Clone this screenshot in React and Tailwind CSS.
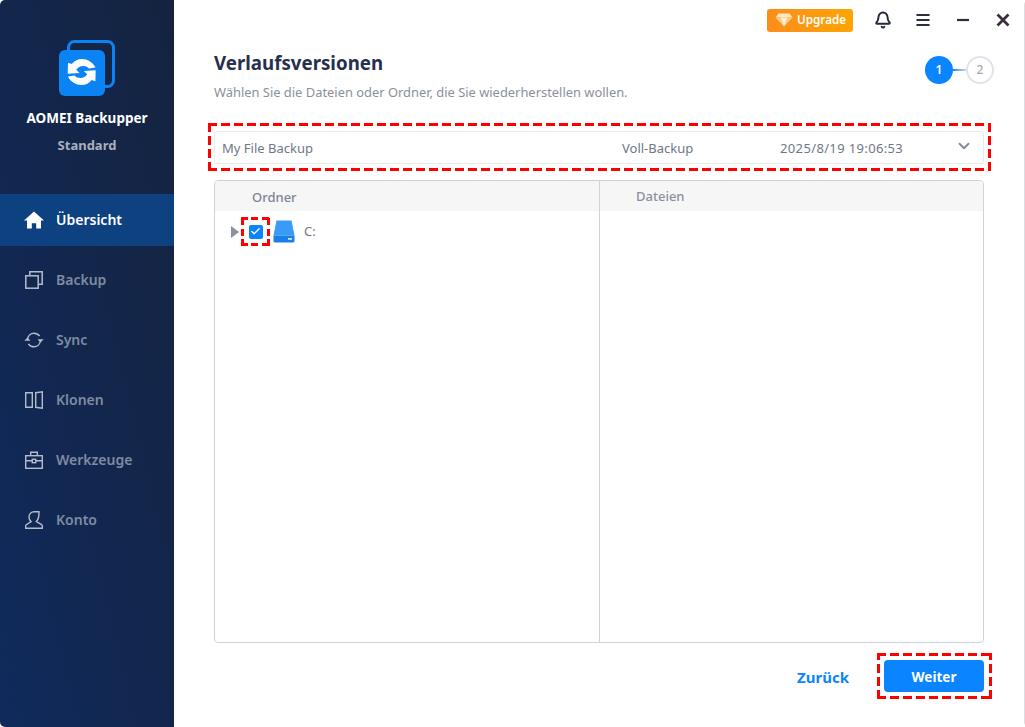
import React from "react";
import { Bell, ChevronDown, Check } from "lucide-react";

const dashLong =
  "[background-image:repeating-linear-gradient(90deg,#ff0000_0,#ff0000_9px,transparent_9px,transparent_13px),repeating-linear-gradient(90deg,#ff0000_0,#ff0000_9px,transparent_9px,transparent_13px),repeating-linear-gradient(0deg,#ff0000_0,#ff0000_9px,transparent_9px,transparent_13px),repeating-linear-gradient(0deg,#ff0000_0,#ff0000_9px,transparent_9px,transparent_13px)] [background-size:100%_3px,100%_3px,3px_100%,3px_100%] [background-position:0_0,0_100%,0_0,100%_0] bg-no-repeat";
const dashShort =
  "[background-image:repeating-linear-gradient(90deg,#ff0000_0,#ff0000_7px,transparent_7px,transparent_10.5px),repeating-linear-gradient(90deg,#ff0000_0,#ff0000_7px,transparent_7px,transparent_10.5px),repeating-linear-gradient(0deg,#ff0000_0,#ff0000_7px,transparent_7px,transparent_10.5px),repeating-linear-gradient(0deg,#ff0000_0,#ff0000_7px,transparent_7px,transparent_10.5px)] [background-size:100%_3px,100%_3px,3px_100%,3px_100%] [background-position:0_0,0_100%,0_0,100%_0] bg-no-repeat";

function BackupIcon() {
  return (
    <svg width="18" height="18" viewBox="0 0 18 18" fill="none" stroke="#b4bccb" strokeWidth="1.5">
      <rect x="0.8" y="4.800" width="12.400" height="12.400" />
      <path d="M4.800 4.500V0.800H17.200V13.200H13.500" />
    </svg>
  );
}
function SyncIcon() {
  return (
    <svg width="20" height="18" viewBox="0 0 20 18" fill="none" stroke="#b4bccb" strokeWidth="1.4">
      <path d="M3.500 8.500C3.900 4.800 6.600 2.200 10 2.200c2.400 0 4.300 1 5.600 2.800" />
      <path d="M16.500 9.500c-.4 3.700-3.100 6.300-6.500 6.300-2.400 0-4.300-1-5.600-2.800" />
      <path d="M0.300 9.800L3.500 6.600L6.500 9.800Z" fill="#b4bccb" stroke="none" />
      <path d="M19.700 8.200L16.500 11.400L13.500 8.200Z" fill="#b4bccb" stroke="none" />
    </svg>
  );
}
function CloneIcon() {
  return (
    <svg width="18" height="18" viewBox="0 0 18 18" fill="none" stroke="#b4bccb" strokeWidth="1.4">
      <path d="M0.700 1.700H7.300V16.300H0.700Z" />
      <path d="M10.700 1.700L17.300 0.800V17.200L10.700 16.300Z" />
    </svg>
  );
}
function ToolsIcon() {
  return (
    <svg width="18" height="18" viewBox="0 0 18 18" fill="none" stroke="#b4bccb" strokeWidth="1.4">
      <rect x="0.700" y="4.700" width="16.600" height="12.600" />
      <path d="M5.700 4.500V1.200H12.300V4.500" />
      <path d="M0.700 9.700H7M11 9.700H17.300" />
      <rect x="7.300" y="8.300" width="3.400" height="3.400" />
    </svg>
  );
}
function UserIcon() {
  return (
    <svg width="18" height="18" viewBox="0 0 18 18" fill="none" stroke="#b4bccb" strokeWidth="1.4">
      <path d="M6 10.600C4.500 9.400 4 8 4 6c0-3.200 2.200-5.300 5.200-5.300H14c0 2 0 3.300-.4 5.300-.4 2-1 3.500-2.200 4.600l5.300 3.100c.4.300.6.600.6 1v2.600H.7v-2.600c0-.4.200-.7.600-1Z" />
    </svg>
  );
}
function HomeIcon() {
  return (
    <svg width="20" height="18" viewBox="0 0 20 18" fill="#ffffff">
      <path d="M10 0.500L0 9.500h3V17.500h4.800v-5.300h4.400v5.300H17V9.500h3Z" />
    </svg>
  );
}
function Logo() {
  const arrow =
    "M36.500 27.500C33.500 22 28.500 19 23 19C18.500 19 15 21 12.800 24L9 22.800L8.700 33.800L20.500 33L17.300 29.800C18.800 27.300 21 26 24 26C26.500 26 28.500 26.800 30 28.500Z";
  return (
    <svg width="56" height="56" viewBox="0 0 56 56" fill="none">
      <rect x="9.500" y="1.500" width="45" height="45" rx="6" stroke="#0a84f5" strokeWidth="3" />
      <rect x="0" y="10" width="46" height="46" rx="6" fill="#0a84f5" />
      <path d={arrow} fill="#ffffff" />
      <path d={arrow} fill="#ffffff" transform="rotate(180 22.700 32)" />
    </svg>
  );
}
function Gem() {
  return (
    <svg width="18" height="14" viewBox="0 0 18 14">
      <path d="M3.500 0.500H14.500L17.500 4.500H0.500Z" fill="#ffe9c4" />
      <path d="M0.500 4.500H17.500L9 13.500Z" fill="#ffc97f" />
      <path d="M5.500 4.500H12.500L9 13.500Z" fill="#fff0d6" />
    </svg>
  );
}
function Drive() {
  return (
    <svg width="22" height="23" viewBox="0 0 22 23">
      <path d="M3.500 0.500H18.500L21.500 15.500H0.500Z" fill="#3a9bf6" />
      <path d="M0.500 15.500H21.500V21a1.500 1.500 0 0 1-1.500 1.500H2A1.500 1.500 0 0 1 .5 21Z" fill="#1a7fe8" />
      <rect x="15" y="18" width="4" height="1.800" fill="#cfe7ff" />
    </svg>
  );
}

function NavItem({ icon, label, active }) {
  return (
    <div
      className={
        active
          ? "h-[52px] flex items-center pl-[24px] bg-[#0d417f] text-white"
          : "h-[52px] mt-[8px] flex items-center pl-[24px] text-[#7e8ba3]"
      }
    >
      <span className="w-[20px] flex justify-center">{icon}</span>
      <span className="ml-[12px] text-[14px] font-semibold leading-none">{label}</span>
    </div>
  );
}

export default function App() {
  return (
    <div
      className="w-[1025px] h-[727px] flex overflow-hidden rounded-[5px] bg-white text-[#6f7786]"
      style={{ fontFamily: '"Noto Sans", "Open Sans", sans-serif' }}
    >
      <aside className="w-[174px] shrink-0 bg-gradient-to-tr from-[#0f2a5c] to-[#15233f] flex flex-col">
        <div className="pt-[40px] flex flex-col items-center">
          <div className="ml-[-1px]"><Logo /></div>
          <div className="mt-[12px] text-[13.5px] font-bold text-white leading-[20px]">AOMEI Backupper</div>
          <div className="mt-[7px] text-[13px] font-bold text-[#a9b0bd] leading-[20px]">Standard</div>
        </div>
        <nav className="mt-[39px] flex flex-col">
          <NavItem active icon={<HomeIcon />} label="Übersicht" />
          <NavItem icon={<BackupIcon />} label="Backup" />
          <NavItem icon={<SyncIcon />} label="Sync" />
          <NavItem icon={<CloneIcon />} label="Klonen" />
          <NavItem icon={<ToolsIcon />} label="Werkzeuge" />
          <NavItem icon={<UserIcon />} label="Konto" />
        </nav>
      </aside>

      <main className="flex-1 flex flex-col min-w-0 border-r border-[#dcdde0]">
        <header className="h-[40px] flex items-center justify-end pr-[11px]">
          <div className="h-[23px] w-[86px] rounded-[3px] bg-gradient-to-r from-[#fb8d1a] to-[#ffa400] flex items-center pl-[8px] gap-[4px] text-white text-[11.7px] font-semibold">
            <Gem />
            <span className="leading-none">Upgrade</span>
          </div>
          <Bell size={18} strokeWidth={2.6} className="ml-[21px] mr-[1px] text-[#23283a]" />
          <svg width="20" height="20" viewBox="0 0 20 20" className="ml-[20px] text-[#2a3040]" fill="none" stroke="currentColor" strokeWidth="2.2">
            <path d="M3.500 5H16.500M3.500 10H16.500M3.500 15H16.500" />
          </svg>
          <svg width="20" height="20" viewBox="0 0 20 20" className="ml-[20px] text-[#2a3040]" fill="none" stroke="currentColor" strokeWidth="2.2">
            <path d="M4 10H16" />
          </svg>
          <svg width="20" height="20" viewBox="0 0 20 20" className="ml-[20px] text-[#3a2f3c]" fill="none" stroke="currentColor" strokeWidth="2.8">
            <path d="M4.500 4.500L15.500 15.500M15.500 4.500L4.500 15.500" />
          </svg>
        </header>

        <div className="flex-1 flex flex-col pl-[40px] pr-[40px] min-h-0">
          <div className="flex items-start justify-between h-[83px]">
            <div>
              <h1 className="mt-[9px] text-[18.7px] leading-[28px] font-bold text-[#26304a]">Verlaufsversionen</h1>
              <p className="mt-[5px] text-[12.9px] leading-[20px] text-[#8a909c]">
                Wählen Sie die Dateien oder Ordner, die Sie wiederherstellen wollen.
              </p>
            </div>
            <div className="mt-[16px] -mr-[10px] flex items-center">
              <div className="w-[28px] h-[28px] rounded-full bg-[#0a84ff] text-white text-[12px] font-semibold flex items-center justify-center">1</div>
              <div className="w-[14px] h-[2px] bg-gradient-to-r from-[#0a84ff] to-[#d5dae6]" />
              <div className="w-[28px] h-[28px] -ml-[1px] rounded-full border-2 border-[#e2e4ec] text-[#a5a9b6] text-[12px] font-medium flex items-center justify-center">2</div>
            </div>
          </div>

          <div className={"-ml-[6px] -mr-[7px] h-[48px] flex items-center pl-[6px] pr-[7px] " + dashLong}>
            <div className="w-full h-[33px] border border-[#e8e9ee] rounded-[3px] flex items-center pl-[7px] text-[13px] text-[#6f7786]">
              <span className="w-[400px] pt-[3px]">My File Backup</span>
              <span className="w-[158px] pt-[3px]">Voll-Backup</span>
              <span className="w-[175px] pt-[3px] tracking-[0.36px]">2025/8/19 19:06:53</span>
              <ChevronDown size={18} strokeWidth={2.4} className="text-[#7f8798] mb-[2px]" />
            </div>
          </div>

          <div className="mt-[9px] h-[463px] border border-[#cfd2d8] rounded-[4px] flex overflow-hidden">
            <div className="w-[385px] border-r border-[#cfd2d8] flex flex-col">
              <div className="h-[30px] bg-[#f6f6f6] flex items-center pl-[37px] pt-[4px] text-[13px] font-medium text-[#7d8594]">Ordner</div>
              <div className="mt-[4px] flex items-center h-[33px] pl-[16px]">
                <svg width="8" height="12" viewBox="0 0 8 12" className="shrink-0"><path d="M0 0L8 6L0 12Z" fill="#8b909c" /></svg>
                <div className={"ml-[2px] w-[29px] h-[29px] flex items-center justify-center " + dashShort}>
                  <div className="w-[14px] h-[14px] rounded-[2px] bg-[#0a84ff] flex items-center justify-center">
                    <Check size={11} strokeWidth={3} className="text-white" />
                  </div>
                </div>
                <div className="ml-[3px]"><Drive /></div>
                <span className="ml-[9px] text-[13px] text-[#6f7786]">C:</span>
              </div>
            </div>
            <div className="flex-1 flex flex-col">
              <div className="h-[30px] bg-[#f6f6f6] flex items-center pl-[36px] pt-[2px] text-[13px] font-medium text-[#8a909f]">Dateien</div>
            </div>
          </div>

          <div className="flex items-start justify-end mt-[10px]">
            <button className="mt-[8px] h-[32px] text-[15px] font-bold text-[#0a84ff] mr-[28px]">Zurück</button>
            <div className={"-mr-[8px] w-[115px] h-[46px] flex items-center justify-end pr-[8px] " + dashLong}>
              <button className="w-[100px] h-[32px] pt-[2px] rounded-[4px] bg-[#0a84ff] text-white text-[13.5px] font-bold">Weiter</button>
            </div>
          </div>
        </div>
      </main>
    </div>
  );
}
